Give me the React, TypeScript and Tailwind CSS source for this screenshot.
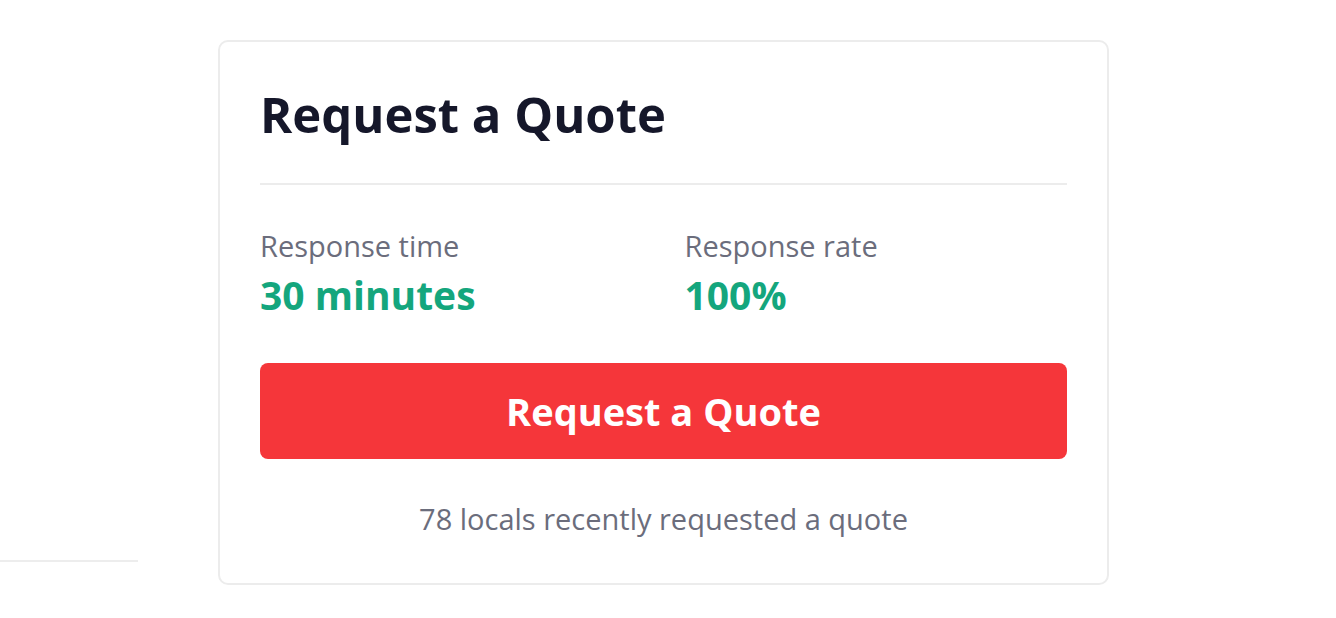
export default function App() {
  return (
    <div
      className="relative w-[1336px] h-[618px] bg-white overflow-hidden"
      style={{ fontFamily: '"Open Sans", "Noto Sans", sans-serif' }}
    >
      {/* line from the neighbouring column */}
      <div className="absolute left-0 top-[560px] w-[138px] h-[2px] bg-[#ededed]" />
      <div className="pl-[218px] pt-[40px]">
        <div className="w-[891px] border-2 border-[#ececec] rounded-[10px] px-[40px] pt-[40px] pb-[44px]">
          <h1 className="text-[49px] leading-[64px] font-bold text-[#15172a]">Request a Quote</h1>
          <div className="mt-[37px] h-[2px] bg-[#ececec]" />
          <div className="mt-[41px] grid grid-cols-2 gap-[42px]">
            <div>
              <div className="text-[29px] leading-[40px] text-[#6b6d7c]">Response time</div>
              <div className="mt-[7px] text-[39px] leading-[44px] font-bold text-[#14a67d]">30 minutes</div>
            </div>
            <div>
              <div className="text-[29px] leading-[40px] text-[#6b6d7c]">Response rate</div>
              <div className="mt-[7px] text-[39px] leading-[44px] font-bold text-[#14a67d]">100%</div>
            </div>
          </div>
          <button className="mt-[46px] w-full h-[96px] rounded-[8px] bg-[#f5363a] text-white text-[38px] font-bold">
            Request a Quote
          </button>
          <p className="mt-[40px] text-center text-[29px] leading-[40px] text-[#6b6d7c]">78 locals recently requested a quote</p>
        </div>
      </div>
    </div>
  );
}
